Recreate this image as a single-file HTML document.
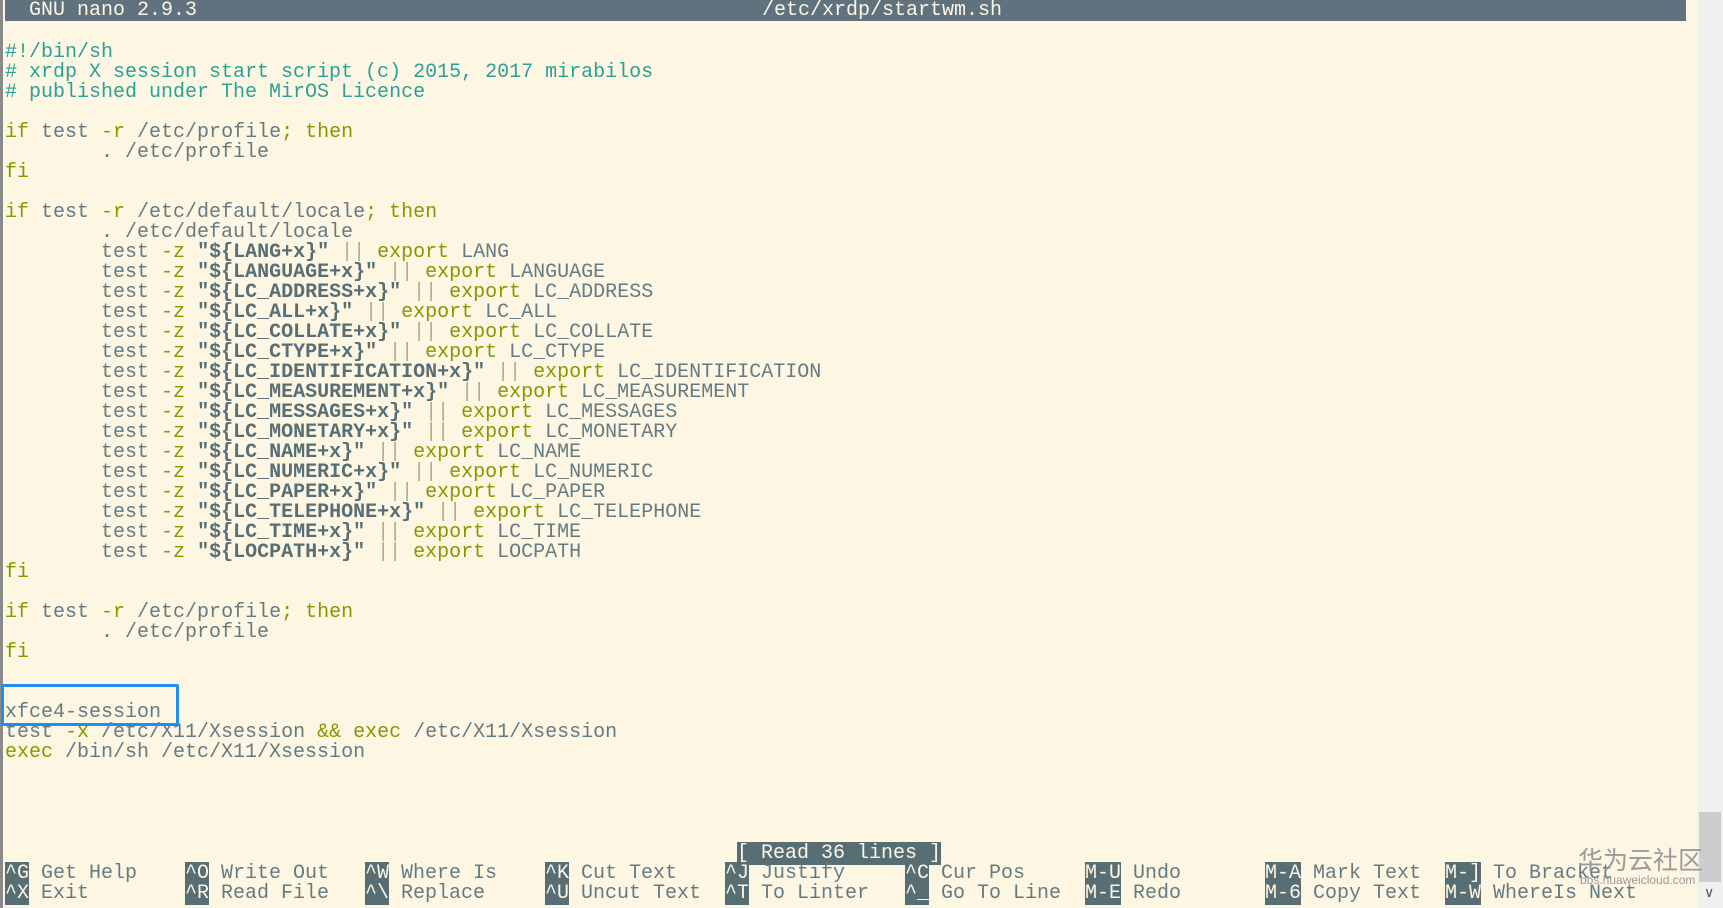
<!DOCTYPE html>
<html><head><meta charset="utf-8"><style>
html,body{margin:0;padding:0;}
body{width:1723px;height:908px;background:#fdf6e3;position:relative;overflow:hidden;font-family:"Liberation Mono","DejaVu Sans Mono",monospace;font-size:20px;color:#657b83;}
.lb{position:absolute;left:0;top:0;width:3px;height:908px;background:#8a8a8a;}
.hdr{position:absolute;left:5px;top:0;width:1681px;height:21px;background:#5f727e;color:#fdf6e3;}
.hdr span{position:absolute;top:0;line-height:21px;white-space:pre;}
.w{position:absolute;left:0;top:3px;width:1723px;height:905px;}
.r{position:absolute;left:5px;white-space:pre;line-height:20px;height:20px;}
.c{color:#2aa198}.k{color:#859900}.s{color:#586e75;font-weight:bold;}.p{color:#a9b08a}
.key{background:#586e75;color:#fdf6e3;}
.box{position:absolute;left:1px;top:684px;width:172px;height:36px;border:3px solid #1e8ff0;border-radius:2px;}
.sb{position:absolute;left:1697px;top:0;width:26px;height:908px;background:#f0f0f0;}
.th{position:absolute;left:1699px;top:812px;width:22px;height:70px;background:#cdcdcd;}
.wm{position:absolute;left:1578px;top:845px;font-family:"Noto Sans CJK SC",sans-serif;font-size:25px;color:#9a9a9a;line-height:28px;}
.wm2{position:absolute;left:1580px;top:873px;font-family:"Liberation Sans",sans-serif;font-size:12px;color:#9a9a9a;}
</style></head><body>
<div class="lb"></div>
<div class="hdr"><span style="left:24px">GNU nano 2.9.3</span><span style="left:757px">/etc/xrdp/startwm.sh</span></div>
<div class="w">
<div class="r c" style="top:40px">#!/bin/sh</div>
<div class="r c" style="top:60px"># xrdp X session start script (c) 2015, 2017 mirabilos</div>
<div class="r c" style="top:80px"># published under The MirOS Licence</div>
<div class="r" style="top:120px"><span class="k">if</span> test <span class="k">-r</span> /etc/profile<span class="k">; then</span></div>
<div class="r" style="top:140px">        . /etc/profile</div>
<div class="r k" style="top:160px">fi</div>
<div class="r" style="top:200px"><span class="k">if</span> test <span class="k">-r</span> /etc/default/locale<span class="k">; then</span></div>
<div class="r" style="top:220px">        . /etc/default/locale</div>
<div class="r" style="top:240px">        test <span class="k">-z</span> <span class="s">"${LANG+x}"</span> <span class="p">||</span> <span class="k">export</span> LANG</div>
<div class="r" style="top:260px">        test <span class="k">-z</span> <span class="s">"${LANGUAGE+x}"</span> <span class="p">||</span> <span class="k">export</span> LANGUAGE</div>
<div class="r" style="top:280px">        test <span class="k">-z</span> <span class="s">"${LC_ADDRESS+x}"</span> <span class="p">||</span> <span class="k">export</span> LC_ADDRESS</div>
<div class="r" style="top:300px">        test <span class="k">-z</span> <span class="s">"${LC_ALL+x}"</span> <span class="p">||</span> <span class="k">export</span> LC_ALL</div>
<div class="r" style="top:320px">        test <span class="k">-z</span> <span class="s">"${LC_COLLATE+x}"</span> <span class="p">||</span> <span class="k">export</span> LC_COLLATE</div>
<div class="r" style="top:340px">        test <span class="k">-z</span> <span class="s">"${LC_CTYPE+x}"</span> <span class="p">||</span> <span class="k">export</span> LC_CTYPE</div>
<div class="r" style="top:360px">        test <span class="k">-z</span> <span class="s">"${LC_IDENTIFICATION+x}"</span> <span class="p">||</span> <span class="k">export</span> LC_IDENTIFICATION</div>
<div class="r" style="top:380px">        test <span class="k">-z</span> <span class="s">"${LC_MEASUREMENT+x}"</span> <span class="p">||</span> <span class="k">export</span> LC_MEASUREMENT</div>
<div class="r" style="top:400px">        test <span class="k">-z</span> <span class="s">"${LC_MESSAGES+x}"</span> <span class="p">||</span> <span class="k">export</span> LC_MESSAGES</div>
<div class="r" style="top:420px">        test <span class="k">-z</span> <span class="s">"${LC_MONETARY+x}"</span> <span class="p">||</span> <span class="k">export</span> LC_MONETARY</div>
<div class="r" style="top:440px">        test <span class="k">-z</span> <span class="s">"${LC_NAME+x}"</span> <span class="p">||</span> <span class="k">export</span> LC_NAME</div>
<div class="r" style="top:460px">        test <span class="k">-z</span> <span class="s">"${LC_NUMERIC+x}"</span> <span class="p">||</span> <span class="k">export</span> LC_NUMERIC</div>
<div class="r" style="top:480px">        test <span class="k">-z</span> <span class="s">"${LC_PAPER+x}"</span> <span class="p">||</span> <span class="k">export</span> LC_PAPER</div>
<div class="r" style="top:500px">        test <span class="k">-z</span> <span class="s">"${LC_TELEPHONE+x}"</span> <span class="p">||</span> <span class="k">export</span> LC_TELEPHONE</div>
<div class="r" style="top:520px">        test <span class="k">-z</span> <span class="s">"${LC_TIME+x}"</span> <span class="p">||</span> <span class="k">export</span> LC_TIME</div>
<div class="r" style="top:540px">        test <span class="k">-z</span> <span class="s">"${LOCPATH+x}"</span> <span class="p">||</span> <span class="k">export</span> LOCPATH</div>
<div class="r k" style="top:560px">fi</div>
<div class="r" style="top:600px"><span class="k">if</span> test <span class="k">-r</span> /etc/profile<span class="k">; then</span></div>
<div class="r" style="top:620px">        . /etc/profile</div>
<div class="r k" style="top:640px">fi</div>
<div class="r" style="top:700px">xfce4-session</div>
<div class="r" style="top:720px">test <span class="k">-x</span> /etc/X11/Xsession <span class="k">&amp;&amp; exec</span> /etc/X11/Xsession</div>
<div class="r" style="top:740px"><span class="k">exec</span> /bin/sh /etc/X11/Xsession</div>
<div class="r" style="top:841px;left:737px"><span class="key">[ Read 36 lines ]</span></div>
<div class="r" style="top:861px;left:5px"><span class="key">^G</span> Get Help</div>
<div class="r" style="top:881px;left:5px"><span class="key">^X</span> Exit</div>
<div class="r" style="top:861px;left:185px"><span class="key">^O</span> Write Out</div>
<div class="r" style="top:881px;left:185px"><span class="key">^R</span> Read File</div>
<div class="r" style="top:861px;left:365px"><span class="key">^W</span> Where Is</div>
<div class="r" style="top:881px;left:365px"><span class="key">^\</span> Replace</div>
<div class="r" style="top:861px;left:545px"><span class="key">^K</span> Cut Text</div>
<div class="r" style="top:881px;left:545px"><span class="key">^U</span> Uncut Text</div>
<div class="r" style="top:861px;left:725px"><span class="key">^J</span> Justify</div>
<div class="r" style="top:881px;left:725px"><span class="key">^T</span> To Linter</div>
<div class="r" style="top:861px;left:905px"><span class="key">^C</span> Cur Pos</div>
<div class="r" style="top:881px;left:905px"><span class="key">^_</span> Go To Line</div>
<div class="r" style="top:861px;left:1085px"><span class="key">M-U</span> Undo</div>
<div class="r" style="top:881px;left:1085px"><span class="key">M-E</span> Redo</div>
<div class="r" style="top:861px;left:1265px"><span class="key">M-A</span> Mark Text</div>
<div class="r" style="top:881px;left:1265px"><span class="key">M-6</span> Copy Text</div>
<div class="r" style="top:861px;left:1445px"><span class="key">M-]</span> To Bracket</div>
<div class="r" style="top:881px;left:1445px"><span class="key">M-W</span> WhereIs Next</div>
</div>
<div class="box"></div>
<div class="sb"></div><div class="th"></div>
<div style="position:absolute;left:1704px;top:884px;font-size:14px;color:#555;font-family:'Liberation Sans',sans-serif">&#8744;</div>
<div class="wm">华为云社区</div>
<div class="wm2">bbs.huaweicloud.com</div>
</body></html>
